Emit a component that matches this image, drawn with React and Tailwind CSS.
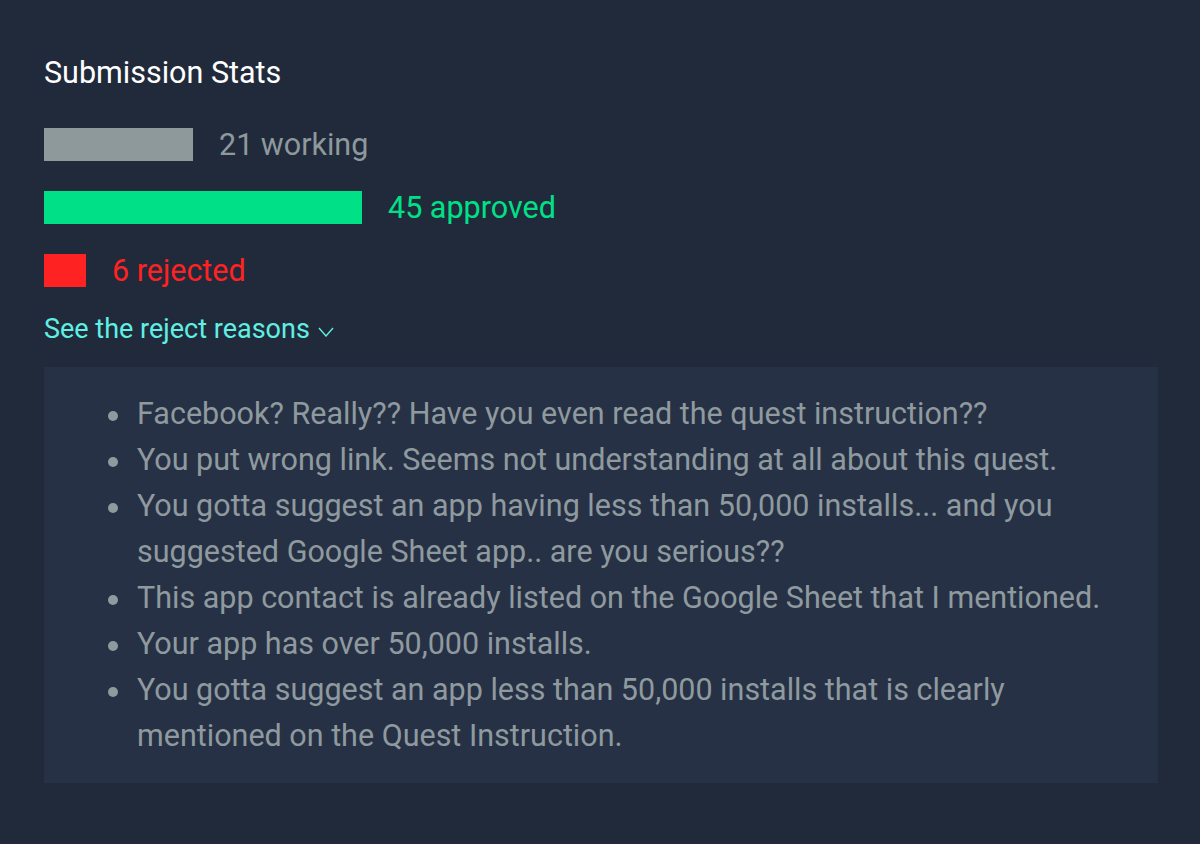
import React from 'react';

const stats = [
  { label: '21 working', width: 149, bar: 'bg-[#8d999b]', text: 'text-[#8d999b]' },
  { label: '45 approved', width: 318, bar: 'bg-[#00e187]', text: 'text-[#00e187]' },
  { label: '6 rejected', width: 42, bar: 'bg-[#ff2222]', text: 'text-[#ff2222]' }
];

const reasons = [
  'Facebook? Really?? Have you even read the quest instruction??',
  'You put wrong link. Seems not understanding at all about this quest.',
  'You gotta suggest an app having less than 50,000 installs... and you suggested Google Sheet app.. are you serious??',
  'This app contact is already listed on the Google Sheet that I mentioned.',
  'Your app has over 50,000 installs.',
  'You gotta suggest an app less than 50,000 installs that is clearly mentioned on the Quest Instruction.'
];

export default function App() {
  return <div className="w-[1200px] h-[844px] bg-[#212a3b] px-[44px] pt-[55px] font-['Roboto',sans-serif]">
      <h2 className="text-[30.5px] leading-[36px] text-white">Submission Stats</h2>

      {/* bars */}
      <div className="mt-[37px] flex flex-col gap-[30px]">
        {stats.map(s => <div key={s.label} className="flex items-center gap-[26px] h-[33px]">
            <div className={`h-[33px] ${s.bar}`} style={{ width: `${s.width}px` }} />
            <span className={`text-[30.5px] leading-[33px] ${s.text}`}>{s.label}</span>
          </div>)}
      </div>

      <button className="mt-[26px] flex items-center gap-[8px] text-[27px] leading-[32px] text-[#5ff0e3]">
        See the reject reasons
        <svg width="16" height="10" viewBox="0 0 16 10" fill="none" className="mt-[6px]">
          <path d="M1 1 L8 9 L15 1" stroke="#5ff0e3" strokeWidth="1.4" />
        </svg>
      </button>

      <div className="mt-[22px] w-[1114px] bg-[#273145] pl-[64px] pr-[24px] py-[24px]">
        <ul className="text-[30.5px] leading-[46px] text-[#8f9a9f]">
          {reasons.map(r => <li key={r} className="flex">
              <span className="w-[29px] h-[46px] pt-[4px] shrink-0 flex items-center">
                <span className="w-[10px] h-[10px] rounded-full bg-[#8f9a9f]" />
              </span>
              <span>{r}</span>
            </li>)}
        </ul>
      </div>
    </div>;
}
